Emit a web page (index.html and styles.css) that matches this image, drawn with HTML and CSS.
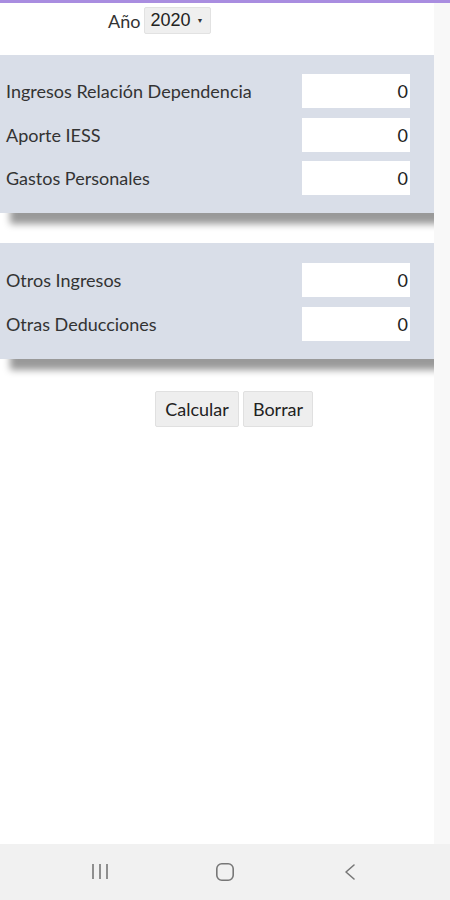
FILE: index.html
```html
<!DOCTYPE html>
<html lang="es">
<head>
<meta charset="utf-8">
<title>Calculadora</title>
<link rel="stylesheet" href="styles.css">
</head>
<body>
<div class="screen">
  <div class="page">
    <div class="year-row">
      <span class="year-label">Año</span>
      <span class="select">2020<span class="caret">▼</span></span>
    </div>
    <div class="panel panel-1">
      <div class="row"><span class="label">Ingresos Relación Dependencia</span><span class="field">0</span></div>
      <div class="row"><span class="label">Aporte IESS</span><span class="field">0</span></div>
      <div class="row"><span class="label">Gastos Personales</span><span class="field">0</span></div>
    </div>
    <div class="panel panel-2">
      <div class="row"><span class="label">Otros Ingresos</span><span class="field">0</span></div>
      <div class="row"><span class="label">Otras Deducciones</span><span class="field">0</span></div>
    </div>
    <div class="actions">
      <button class="btn btn-calc">Calcular</button>
      <button class="btn btn-clear">Borrar</button>
    </div>
  </div>
  <div class="side"></div>
</div>
<nav class="navbar">
  <svg class="nav-icon" width="20" height="20" viewBox="0 0 20 20"><path d="M3 2v15M10 2v15M17 2v15" stroke="#777" stroke-width="1.6" fill="none"/></svg>
  <svg class="nav-icon" width="20" height="20" viewBox="0 0 20 20"><rect x="1.8" y="1.8" width="16.4" height="16.4" rx="5" stroke="#777" stroke-width="1.6" fill="none"/></svg>
  <svg class="nav-icon" width="20" height="20" viewBox="0 0 20 20"><path d="M14 3l-8 7 8 7" stroke="#777" stroke-width="1.6" fill="none" stroke-linecap="round" stroke-linejoin="round"/></svg>
</nav>
</body>
</html>
```
FILE: styles.css
```css
html, body {
  margin: 0;
  padding: 0;
}
body {
  width: 450px;
  height: 900px;
  overflow: hidden;
  font-family: Lato, "Open Sans", sans-serif;
  color: #2b2b2b;
  background: #ffffff;
  display: flex;
  flex-direction: column;
}
.screen {
  display: flex;
  height: 844px;
  border-top: 3px solid #a98de0;
  box-sizing: border-box;
}
.page {
  width: 434px;
  background: #ffffff;
  overflow: hidden;
  display: flex;
  flex-direction: column;
}
.side {
  flex: 1;
  background: #f8f8f8;
}
.year-row {
  display: flex;
  align-items: center;
  gap: 4px;
  padding-top: 4px;
  padding-left: 108px;
  height: 27px;
  margin-bottom: 21px;
}
.year-label {
  font-size: 18px;
  color: #333;
}
.select {
  display: inline-flex;
  align-items: center;
  width: 67px;
  height: 27px;
  box-sizing: border-box;
  padding: 0 5px;
  background: #efefef;
  border: 1px solid #e2e2e2;
  border-radius: 2px;
  font-family: "Liberation Sans", Arial, sans-serif;
  font-size: 18px;
  color: #222;
}
.caret {
  font-size: 7px;
  margin-left: 6px;
  color: #333;
}
.panel {
  background: #d9dee8;
  box-shadow: 10px 11px 7px rgba(0, 0, 0, 0.4);
  display: flex;
  flex-direction: column;
  gap: 9.5px;
  padding: 19px 24px 18px 6px;
}
.panel-1 {
  margin-bottom: 30px;
}
.panel-2 {
  padding-top: 20px;
  margin-bottom: 32px;
}
.row {
  display: flex;
  align-items: center;
  justify-content: space-between;
  height: 34px;
}
.label {
  font-size: 18px;
  color: #333;
}
.field {
  width: 108px;
  height: 34px;
  box-sizing: border-box;
  background: #ffffff;
  text-align: right;
  padding-right: 2px;
  font-size: 18px;
  line-height: 34px;
  color: #222;
}
.actions {
  display: flex;
  gap: 4px;
  padding-left: 155px;
}
.btn {
  height: 36px;
  font-family: Lato, "Open Sans", sans-serif;
  font-size: 18px;
  color: #222;
  background: #eeeeee;
  border: 1px solid #e0e0e0;
  border-radius: 2px;
  padding: 0;
}
.btn-calc {
  width: 84px;
}
.btn-clear {
  width: 70px;
}
.navbar {
  height: 56px;
  background: #f1f1f1;
  display: flex;
  align-items: center;
  padding-left: 90px;
}
.nav-icon {
  display: block;
}
.nav-icon + .nav-icon {
  margin-left: 105px;
}
```
